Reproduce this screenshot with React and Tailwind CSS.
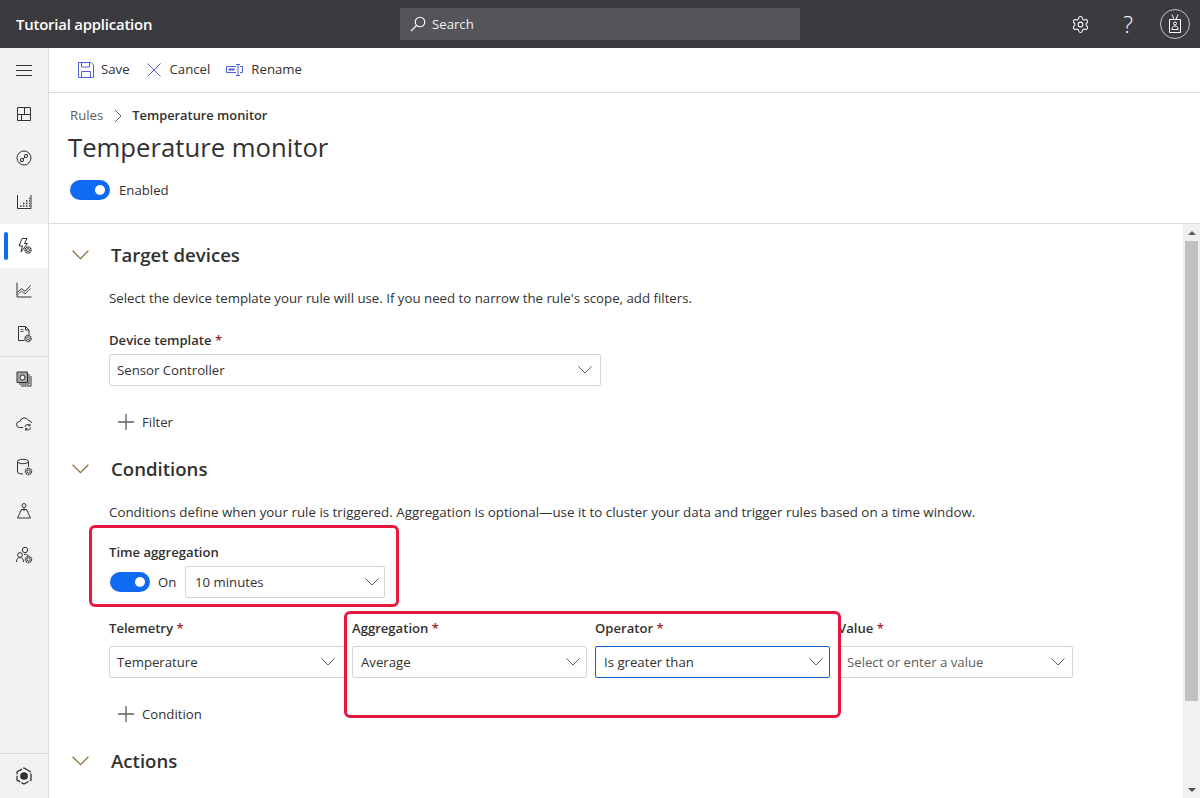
import React from 'react';
import { Settings } from 'lucide-react';

// small gear used as a badge on most of the nav icons
const Gear = ({ cx, cy, r = 3 }) => (
  <g>
    <circle cx={cx} cy={cy} r={r} fill="#f3f2f1" stroke="#323130" strokeWidth="1.5" strokeDasharray="1.4 0.6" />
    <circle cx={cx} cy={cy} r={r - 1.6} fill="#f3f2f1" stroke="#323130" strokeWidth="0.8" />
  </g>
);

const NavIcon = ({ children }) => (
  <svg width="18" height="18" viewBox="0 0 18 18" fill="none" stroke="#323130" strokeWidth="1">
    {children}
  </svg>
);

const navTop = [
  <NavIcon key="dash">
    <path d="M2.5 2.5h13v13h-13z M9.5 2.5v7 M2.5 9.5h13 M6.5 9.5v6" />
  </NavIcon>,
  <NavIcon key="devices">
    <circle cx="9" cy="9" r="7" />
    <path d="M5.5 12.5l7-7" />
    <circle cx="7" cy="11" r="1.6" fill="#f3f2f1" />
    <circle cx="11" cy="7" r="1.6" fill="#f3f2f1" />
  </NavIcon>,
  <NavIcon key="grid">
    <path d="M2.5 2v13.5h13.5V2" />
    <path d="M5 13h1.5M8 13h1.5M11 13h1.5M14 13h1M8 10.5h1.5M11 10.5h1.5M14 10.5h1M11 8h1.5M14 8h1M14 5.5h1" strokeWidth="1.4" />
  </NavIcon>,
];

const navRules = (
  <NavIcon>
    <path d="M7 1.5h5L9.5 6.5h3L6 15M7 1.5L4 9h3.5L6 15" />
    <Gear cx={13} cy={13} />
  </NavIcon>
);

const navMid = [
  <NavIcon key="analytics">
    <path d="M2 1.5V16h14.5" />
    <path d="M2.5 11.5L6.5 7.5L10 10.5L15.5 4.5" />
    <path d="M2.5 14L6.5 10L10 13L15.5 7.5" strokeWidth="0.8" />
  </NavIcon>,
  <NavIcon key="jobs">
    <path d="M3.5 15.5V1.5h7l3.5 3.5v5M3.5 15.5h6M10.5 1.5v3.5h3.5" />
    <path d="M5.5 4.5h3M5.5 6.5h3" strokeWidth="0.8" />
    <Gear cx={13} cy={13.5} />
  </NavIcon>,
];

const navLower = [
  <NavIcon key="images">
    <path d="M2 2h10.5v10.5H2z" fill="#a8a6a4" />
    <path d="M14 4v10H4M16 6v10H6" />
    <circle cx="7.5" cy="7.5" r="2.5" fill="#f3f2f1" />
  </NavIcon>,
  <NavIcon key="cloud">
    <path d="M8 13.5H4.5a3 3 0 010-6h.5a4.5 4.5 0 018.5-1A3 3 0 0116.5 9" />
    <path d="M10 13a2.8 2.8 0 015-1.5M15.5 13.5a2.8 2.8 0 01-5 1.5M15 9.8v2h-2M10.5 16.5v-2h2" />
  </NavIcon>,
  <NavIcon key="data">
    <ellipse cx="8" cy="3.5" rx="5.5" ry="2.2" />
    <path d="M2.5 3.5v10.5c0 1.2 2.5 2 5.5 2M13.5 3.5V9" />
    <Gear cx={13.5} cy={13.5} />
  </NavIcon>,
  <NavIcon key="admin">
    <circle cx="9" cy="3.5" r="2" />
    <path d="M9 5.5V9M6.5 7.5h5L15.5 16h-13z" />
  </NavIcon>,
  <NavIcon key="users">
    <circle cx="10" cy="4" r="2.7" />
    <circle cx="5" cy="9" r="2.4" />
    <path d="M1.5 16c0-3 1.5-4.5 3.5-4.5s3.500 1.500 3.500 4.500M9 8.500c2-.5 3.500 0 4.500 1.500" />
    <Gear cx={13.5} cy={13.5} />
  </NavIcon>,
];

const Chevron = ({ className = 'stroke-[#605e5c]', size = 14 }) => (
  <svg width={size} height={Math.round(size * 0.6)} viewBox="0 0 14 8" fill="none" className={className} strokeWidth="1">
    <path d="M0.500 0.500L7 7L13.500 0.500" />
  </svg>
);

const Toggle = () => (
  <span className="flex items-center w-10 h-5 rounded-full bg-[#0f6cf2] justify-end pr-[5px] shrink-0">
    <span className="w-[10px] h-[10px] rounded-full bg-white" />
  </span>
);

const Label = ({ children, required }) => (
  <div className="text-[13.1px] font-semibold text-[#323130] leading-[20px] whitespace-nowrap">
    {children}
    {required && <span className="text-[#a4262c]"> *</span>}
  </div>
);

const Select = ({ value, placeholder, focused, className = 'pl-[8px] pr-[6px]' }) => (
  <div
    className={`flex items-center justify-between h-8 bg-white rounded-[2px] border ${
      focused ? 'border-[#0f62c4]' : 'border-[#d6d6d6]'
    } ${className}`}
  >
    <span className={`pt-[2px] text-[13.2px] whitespace-nowrap ${placeholder ? 'text-[#605e5c]' : 'text-[#323130]'}`}>
      {value}
    </span>
    <Chevron />
  </div>
);

const Section = ({ title }) => (
  <div className="flex items-center h-8">
    <span className="w-[40px] pl-[1px]">
      <Chevron className="stroke-[#8a6d3b]" size={17} />
    </span>
    <h2 className="text-[18.6px] font-semibold text-[#323130]">{title}</h2>
  </div>
);

const AddButton = ({ label }) => (
  <div className="flex items-center gap-[8px] h-8 pl-[9px] text-[13.2px] text-[#323130]">
    <svg width="16" height="16" viewBox="0 0 16 16" stroke="#605e5c" strokeWidth="1.300">
      <path d="M8 0v16M0 8h16" />
    </svg>
    <span className="pt-[2px]">{label}</span>
  </div>
);

const NavItem = ({ children, active }) => (
  <div className={`relative flex items-center justify-center h-11 ${active ? 'bg-white' : ''}`}>
    {active && <span className="absolute left-1 top-[8px] w-1 h-[28px] rounded-full bg-[#0f6cf2]" />}
    {children}
  </div>
);

export default function App() {
  return (
    <div className="flex flex-col w-[1200px] h-[798px] overflow-hidden bg-white font-['Open_Sans','Noto_Sans',sans-serif]">
      {/* Header */}
      <header className="flex items-center h-12 shrink-0 bg-[#3b3a3f] text-white">
        <div className="w-[400px] pl-4 text-[14.9px] font-semibold tracking-[-0.2px]">Tutorial application</div>
        <div className="flex items-center gap-[6px] w-[400px] h-8 pl-[10px] rounded-[2px] bg-[#55545a] text-[13.2px] text-[#f3f2f1]">
          <svg width="16" height="16" viewBox="0 0 16 16" fill="none" stroke="#fff" strokeWidth="1.100">
            <circle cx="10" cy="6" r="4.800" />
            <path d="M6.500 9.500L1 15" />
          </svg>
          <span className="pt-[2px]">Search</span>
        </div>
        <div className="flex items-center ml-auto pr-[10px]">
          <Settings size={19} strokeWidth={1.3} />
          <span className="ml-[14px] mr-[8px] w-[48px] text-center text-[23px] leading-none font-light">?</span>
          <span className="flex items-center justify-center w-[30px] h-[30px] rounded-full border border-[#c8c8c8]">
            <svg width="14" height="20" viewBox="0 0 14 20" fill="none" stroke="#fff" strokeWidth="1">
              <path d="M1.500 5.500h11v13h-11z" />
              <path d="M4 0.500l2 5M10 0.500l-2 5" />
              <circle cx="7" cy="9.500" r="1.500" />
              <path d="M3.800 15.500c.3-2.500 1.500-3.500 3.200-3.500s2.900 1 3.200 3.500z" />
            </svg>
          </span>
        </div>
      </header>

      <div className="flex flex-1 min-h-0">
        {/* Left nav */}
        <nav className="flex flex-col w-[49px] shrink-0 bg-[#f3f2f1] border-r border-[#dcdcdc]">
          <div className="flex items-center justify-center h-11">
            <svg width="16" height="11" viewBox="0 0 16 11" stroke="#323130" strokeWidth="1">
              <path d="M0 .500h16M0 5.500h16M0 10.500h16" />
            </svg>
          </div>
          {navTop.map((icon, i) => (
            <NavItem key={i}>{icon}</NavItem>
          ))}
          <NavItem active>{navRules}</NavItem>
          {navMid.map((icon, i) => (
            <NavItem key={i}>{icon}</NavItem>
          ))}
          <div className="border-t border-[#dcdcdc]" />
          {navLower.map((icon, i) => (
            <NavItem key={i}>{icon}</NavItem>
          ))}
          <div className="mt-auto flex items-center justify-center h-[45px] border-t border-[#dcdcdc]">
            <svg width="16" height="18" viewBox="0 0 16 18" fill="none" stroke="#323130" strokeWidth="1.300">
              <path d="M8 1l7 4v8l-7 4-7-4V5z" strokeDasharray="8 1.500" />
              <circle cx="8" cy="9" r="3.200" fill="#323130" />
            </svg>
          </div>
        </nav>

        <main className="flex flex-col flex-1 min-w-0">
          {/* Command bar */}
          <div className="flex items-center h-[45px] shrink-0 pl-[29px] border-b border-[#dcdcdc] text-[13.2px] text-[#323130]">
            <span className="flex items-center gap-[7px] mr-[17px]">
              <svg width="16" height="16" viewBox="0 0 16 16" fill="none" stroke="#4a5fe0" strokeWidth="1">
                <path d="M.500.500h12.500l2.500 2.500v12.500H.500z" />
                <path d="M3.500.500v4.500h8V.500M3.500 15.500V9.500h9v6" />
              </svg>
              Save
            </span>
            <span className="flex items-center gap-[9px] mr-[16px]">
              <svg width="14" height="14" viewBox="0 0 14 14" stroke="#4a5fe0" strokeWidth="1">
                <path d="M.500.500l13 13M13.500.500l-13 13" />
              </svg>
              Cancel
            </span>
            <span className="flex items-center gap-[8px]">
              <svg width="17" height="12" viewBox="0 0 17 12" fill="none" stroke="#4a5fe0" strokeWidth="1">
                <path d="M10 2.500H.500v6H10M14 2.500h2.500v6H14" />
                <path d="M2.500 5.500h6" strokeWidth="2" />
                <path d="M10 .500h4M10 11.500h4M12 .500v11" />
              </svg>
              Rename
            </span>
          </div>

          {/* Page title */}
          <div className="h-[131px] shrink-0 pl-[19px] pt-[13px] border-b border-[#dcdcdc]">
            <div className="flex items-center pl-[2px] h-5 text-[13.2px]">
              <span className="text-[#605e5c]">Rules</span>
              <svg width="8" height="14" viewBox="0 0 8 14" fill="none" stroke="#605e5c" className="ml-[11px] mr-[10px]">
                <path d="M1 1l6 6-6 6" />
              </svg>
              <span className="text-[12.85px] font-semibold text-[#323130]">Temperature monitor</span>
            </div>
            <h1 className="mt-[2px] text-[25.7px] leading-[40px] text-[#323130]">Temperature monitor</h1>
            <div className="flex items-center gap-[9px] mt-[11px] pl-[2px] text-[13.2px] text-[#323130]">
              <Toggle />
              <span className="pt-[2px]">Enabled</span>
            </div>
          </div>

          {/* Scrolling form */}
          <div className="flex flex-1 min-h-0">
            <div className="relative flex-1 min-w-0 pl-[22px] pt-[15px]">
              <Section title="Target devices" />
              <p className="mt-[17px] ml-[38px] h-5 text-[13.25px] leading-5 text-[#323130] whitespace-nowrap">
                Select the device template your rule will use. If you need to narrow the rule's scope, add filters.
              </p>
              <div className="mt-[22px] ml-[38px]">
                <Label required>Device template</Label>
                <Select value="Sensor Controller" className="w-[492px] mt-[4px] pl-[7px] pr-[8px]" />
              </div>
              <div className="mt-5 ml-[38px]">
                <AddButton label="Filter" />
              </div>
              <div className="mt-[15px]">
                <Section title="Conditions" />
              </div>
              <p className="mt-[17px] ml-[38px] h-5 text-[13.35px] leading-5 text-[#323130] whitespace-nowrap">
                Conditions define when your rule is triggered. Aggregation is optional—use it to cluster your data and trigger rules based on a time window.
              </p>
              <div className="mt-[20px] ml-[38px]">
                <Label>Time aggregation</Label>
                <div className="flex items-center mt-[4px] pl-[1px]">
                  <Toggle />
                  <span className="ml-[8px] w-[27px] pt-[1px] text-[13.2px] text-[#323130]">On</span>
                  <Select value="10 minutes" className="w-[200px] pl-[9px] pr-[5px]" />
                </div>
              </div>
              <div className="grid grid-cols-[243px_243px_243px_235px] mt-[20px] ml-[38px]">
                <div>
                  <Label required>Telemetry</Label>
                  <Select value="Temperature" className="w-[236px] mt-[8px] pl-[7px] pr-[9px]" />
                </div>
                <div>
                  <Label required>Aggregation</Label>
                  <Select value="Average" className="w-[235px] mt-[8px] pl-[8px] pr-[6px]" />
                </div>
                <div>
                  <Label required>Operator</Label>
                  <Select value="Is greater than" focused className="w-[235px] mt-[8px] pl-[8px] pr-[6px]" />
                </div>
                <div>
                  <Label required>Value</Label>
                  <Select value="Select or enter a value" placeholder className="w-[235px] mt-[8px] pl-[8px] pr-[7px]" />
                </div>
              </div>
              <div className="mt-5 ml-[38px]">
                <AddButton label="Condition" />
              </div>
              <div className="mt-[15px]">
                <Section title="Actions" />
              </div>

              {/* Red callouts drawn over the form */}
              <div className="absolute left-[40px] top-[301px] w-[310px] h-[82px] rounded-[6px] border-[3px] border-[#e8173f]" />
              <div className="absolute left-[295px] top-[387px] w-[497px] h-[107px] rounded-[6px] border-[3px] border-[#e8173f]" />
            </div>

            {/* Scrollbar */}
            <div className="flex flex-col items-center w-[17px] shrink-0 bg-[#f1f1f1]">
              <div className="flex items-center justify-center h-[17px] w-full">
                <span className="w-0 h-0 border-x-[4px] border-x-transparent border-b-[4px] border-b-[#606060]" />
              </div>
              <div className="w-[13px] h-[460px] bg-[#c1c1c1]" />
              <div className="flex items-center justify-center h-[17px] w-full mt-auto">
                <span className="w-0 h-0 border-x-[4px] border-x-transparent border-t-[4px] border-t-[#505050]" />
              </div>
            </div>
          </div>
        </main>
      </div>
    </div>
  );
}
